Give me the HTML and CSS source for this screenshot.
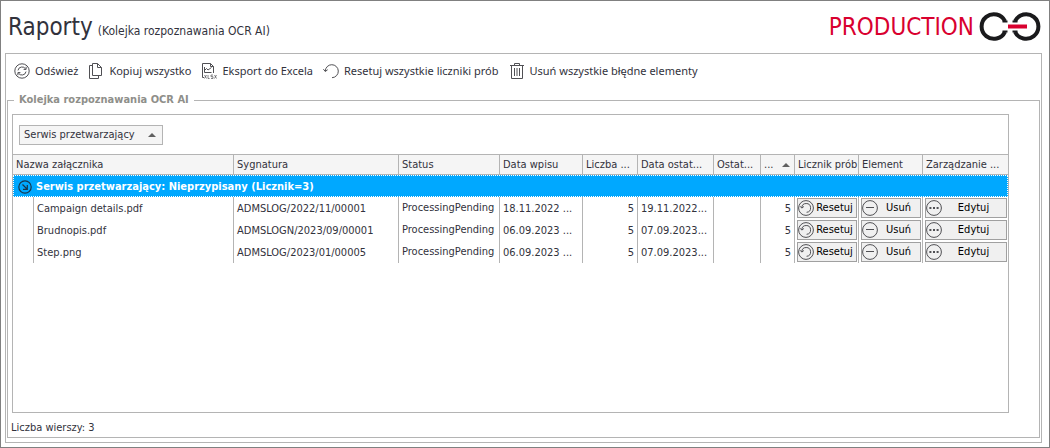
FILE: index.html
```html
<!DOCTYPE html>
<html lang="pl">
<head>
<meta charset="utf-8">
<title>Raporty</title>
<link rel="stylesheet" href="styles.css">
</head>
<body>
<svg class="defs" aria-hidden="true">
  <symbol id="i-reset" viewBox="0 0 16 16"><circle cx="8" cy="8" r="7.4"/><path d="M3.8 7.800A4.400 4.400 0 1 1 8.600 12.300M2.200 6.300l1.600 1.800L5.900 6.500"/></symbol>
  <symbol id="i-minus" viewBox="0 0 16 16"><circle cx="8" cy="8" r="7.4"/><path d="M4 7.500h8"/></symbol>
  <symbol id="i-dots" viewBox="0 0 16 16"><circle cx="8" cy="8" r="7.4"/><path class="dots" d="M3.400 8h2M7 8h2M10.600 8h2"/></symbol>
</svg>
<header class="top">
  <h1 class="title">Raporty</h1>
  <span class="subtitle">(Kolejka rozpoznawania OCR AI)</span>
  <span class="env">PRODUCTION</span>
  <svg class="logo" viewBox="0 0 62 29" aria-hidden="true">
    <path class="ring" d="M26 9.200A12.300 12.300 0 1 0 26 19.800M36 9.200A12.300 12.300 0 1 1 36 19.800"/>
    <path class="foot" d="M23.500 9.500H28.500M23.500 19.500H28.500M33.500 9.500H38.500M33.500 19.500H38.500"/>
    <path class="bar" d="M29 14.500h19"/>
  </svg>
</header>
<main class="panel">
  <nav class="toolbar">
    <button class="tool"><svg class="icon" viewBox="0 0 16 16"><circle cx="8" cy="8" r="7.2"/><path d="M4 7.4A4.1 4.1 0 0 1 11.6 6M12.1 3.8V6.4H9.6M12 8.6A4.1 4.1 0 0 1 4.4 10M3.9 12.2V9.6h2.5"/></svg>Odśwież</button>
    <button class="tool"><svg class="icon" viewBox="0 0 16 16"><path d="M4.500.5H9.500L13.500 4.500V12.500H4.500ZM9.500.5V4.500H13.500M4.500 2.500H1.500V15.500H10.500V12.500"/></svg>Kopiuj wszystko</button>
    <button class="tool"><svg class="icon" viewBox="0 0 16 16"><path d="M3 14.500H1.500V.5H9.500L12.500 3.500V10M9.500.5V3.500H12.500M3.500 7.500 5.500 5.500 7 7 10.500 4.500M3.500 4V9.500H10.500"/><path class="tiny" d="M3.500 12l2 3.500M5.500 12l-2 3.500M7 12v3.500h1.600M12 12h-2v1.700h2v1.800h-2M13.500 12l2 3.500M15.500 12l-2 3.500"/></svg>Eksport do Excela</button>
    <button class="tool"><svg class="icon" viewBox="0 0 16 16"><path d="M2.300 8.200A6.500 6.500 0 1 1 9 14.700M.4 6.200 2.300 8.500 4.700 6.700"/></svg>Resetuj wszystkie liczniki prób</button>
    <button class="tool"><svg class="icon" viewBox="0 0 16 16"><path d="M1 2.500H15M5.500 2.500V.5H10.500V2.500M2.500 2.500V15.500H13.500V2.500M5.500 5V13M8 5V13M10.500 5V13"/></svg>Usuń wszystkie błędne elementy</button>
  </nav>
  <section class="group">
    <h2 class="legend">Kolejka rozpoznawania OCR AI</h2>
    <div class="grid">
      <div class="grouping"><button class="chip">Serwis przetwarzający<i class="sort"></i></button></div>
      <table class="table">
        <colgroup><col class="c-indent"><col><col class="c-sign"><col class="c-status"><col class="c-date"><col class="c-count"><col class="c-last"><col class="c-err"><col class="c-sort"><col class="c-act"><col class="c-act"><col class="c-manage"></colgroup>
        <thead>
          <tr><th colspan="2">Nazwa załącznika</th><th>Sygnatura</th><th>Status</th><th>Data wpisu</th><th>Liczba ...</th><th>Data ostat...</th><th>Ostat...</th><th><span class="sorted"><span>...</span><i class="sort"></i></span></th><th>Licznik prób</th><th>Element</th><th>Zarządzanie ...</th></tr>
        </thead>
        <tbody>
          <tr><td class="band" colspan="12"><div class="band-in"><svg class="arrow" viewBox="0 0 14 14"><circle cx="7" cy="7" r="6.200"/><path d="M4.500 4.500 9 9M9.300 5V9.300H5"/></svg>Serwis przetwarzający: Nieprzypisany (Licznik=3)</div></td></tr>
          <tr><td></td><td>Campaign details.pdf</td><td>ADMSLOG/2022/11/00001</td><td class="st">ProcessingPending</td><td>18.11.2022 ...</td><td class="num">5</td><td>19.11.2022...</td><td></td><td class="num">5</td><td class="act"><button class="cmd"><svg class="icon"><use href="#i-reset"/></svg><span>Resetuj</span></button></td><td class="act"><button class="cmd"><svg class="icon"><use href="#i-minus"/></svg><span>Usuń</span></button></td><td class="act"><button class="cmd"><svg class="icon"><use href="#i-dots"/></svg><span>Edytuj</span></button></td></tr>
          <tr><td></td><td>Brudnopis.pdf</td><td>ADMSLOGN/2023/09/00001</td><td class="st">ProcessingPending</td><td>06.09.2023 ...</td><td class="num">5</td><td>07.09.2023...</td><td></td><td class="num">5</td><td class="act"><button class="cmd"><svg class="icon"><use href="#i-reset"/></svg><span>Resetuj</span></button></td><td class="act"><button class="cmd"><svg class="icon"><use href="#i-minus"/></svg><span>Usuń</span></button></td><td class="act"><button class="cmd"><svg class="icon"><use href="#i-dots"/></svg><span>Edytuj</span></button></td></tr>
          <tr><td></td><td>Step.png</td><td>ADMSLOG/2023/01/00005</td><td class="st">ProcessingPending</td><td>06.09.2023 ...</td><td class="num">5</td><td>07.09.2023...</td><td></td><td class="num">5</td><td class="act"><button class="cmd"><svg class="icon"><use href="#i-reset"/></svg><span>Resetuj</span></button></td><td class="act"><button class="cmd"><svg class="icon"><use href="#i-minus"/></svg><span>Usuń</span></button></td><td class="act"><button class="cmd"><svg class="icon"><use href="#i-dots"/></svg><span>Edytuj</span></button></td></tr>
        </tbody>
      </table>
    </div>
    <div class="footer">Liczba wierszy: 3</div>
  </section>
</main>
</body>
</html>
```
FILE: styles.css
```css
* { box-sizing: border-box; }
body {
  margin: 0; min-height: 100vh; padding: 0 7px 4px 4px;
  border: 1px solid #808080; background: #fff; color: #32323c;
  display: flex; flex-direction: column;
  font: 11px/14px "DejaVu Sans Condensed", "DejaVu Sans", sans-serif;
}
button { font: inherit; color: inherit; margin: 0; }
.defs { position: absolute; width: 0; height: 0; }
.top { display: flex; align-items: baseline; height: 52px; padding: 8px 1px 0 3px; }
.title { margin: 0; font-size: 24px; line-height: 36px; font-weight: 400; }
.subtitle { margin-left: 5px; font-size: 12px; line-height: 16px; }
.env { margin-left: auto; color: #d9002f; font-size: 24px; line-height: 36px; }
.logo { width: 62px; height: 29px; margin-left: 5px; align-self: flex-start; margin-top: 3px; }
.ring { fill: none; stroke: #1a1a1c; stroke-width: 4; }
.foot { stroke: #1a1a1c; stroke-width: 2; }
.bar { stroke: #d9002f; stroke-width: 4; }
.panel { flex: 1; display: flex; flex-direction: column; border: 1px solid #b4b4b4; padding: 5px 1px 4px; }
.toolbar { display: flex; gap: 10px; padding-left: 7px; height: 24px; }
.tool {
  display: flex; align-items: center; gap: 5px; padding: 0; border: 0; background: none;
  font: 11px/16px "Noto Sans", sans-serif; white-space: nowrap;
}
.icon { width: 16px; height: 16px; flex: none; fill: none; stroke: #505054; stroke-width: 1; }
.tiny { stroke-width: .7; }
.dots { stroke-width: 2; }
.group {
  flex: 1; display: flex; flex-direction: column; min-width: 0;
  margin-top: 17px; padding: 0 30px 3px 4px; border: 1px solid #b4b4b4;
}
.legend {
  align-self: flex-start; margin: -8px 0 7px 2px; padding: 0 5px;
  background: #fff; color: #8f8f8a; font-size: 11px; line-height: 14px; font-weight: 700;
}
.grid { flex: 1; border: 1px solid #b4b4b4; }
.grouping { padding: 10px 6px 9px; }
.chip {
  display: flex; align-items: center; justify-content: space-between; width: 144px; height: 20px;
  padding: 0 6px 0 4px; border: 1px solid #b4b4b4; background: #f5f5f5;
}
.sort { border: 4px solid transparent; border-top: 0; border-bottom: 4px solid #606060; }
.table { width: 100%; table-layout: fixed; border-collapse: separate; border-spacing: 0; }
.c-indent { width: 21px; }
.c-sign { width: 165px; }
.c-status { width: 101px; }
.c-date { width: 83px; }
.c-count { width: 55px; }
.c-last { width: 76px; }
.c-err { width: 47px; }
.c-sort { width: 34px; }
.c-act { width: 64px; }
.c-manage { width: 85px; }
th, td {
  height: 22px; padding: 1px 3px 0; border-right: 1px solid #b4b4b4;
  white-space: nowrap; text-align: left; vertical-align: middle;
}
th { height: 21px; padding: 0 0 0 3px; border-top: 1px solid #b4b4b4; border-bottom: 1px solid #b4b4b4; background: #f5f5f5; font-weight: 400; }
th:last-child, td:last-child { border-right: 0; }
.sorted { display: flex; align-items: center; justify-content: space-between; padding-right: 4px; }
.num { text-align: right; }
.st { padding: 0 3px 1px; }
.band { padding: 0; background: #00a8ff; color: #fff; font-weight: 700; }
.band-in { display: flex; align-items: center; gap: 4px; height: 22px; padding: 1px 0 0 4px; border: 1px dotted #fff; }
.arrow { width: 14px; height: 14px; fill: none; stroke: #17364c; stroke-width: 1.2; }
.act { padding: 0 1px 0 2px; }
.cmd {
  display: flex; align-items: center; width: 100%; height: 20px; padding: 0 1px;
  border: 1px solid #a0a0a0; background: #f0f0f0; color: #000;
}
.cmd .icon { margin-left: -1px; }
.cmd span { flex: 1; text-align: center; }
.footer { padding-top: 8px; height: 21px; margin-left: -1px; }
```
